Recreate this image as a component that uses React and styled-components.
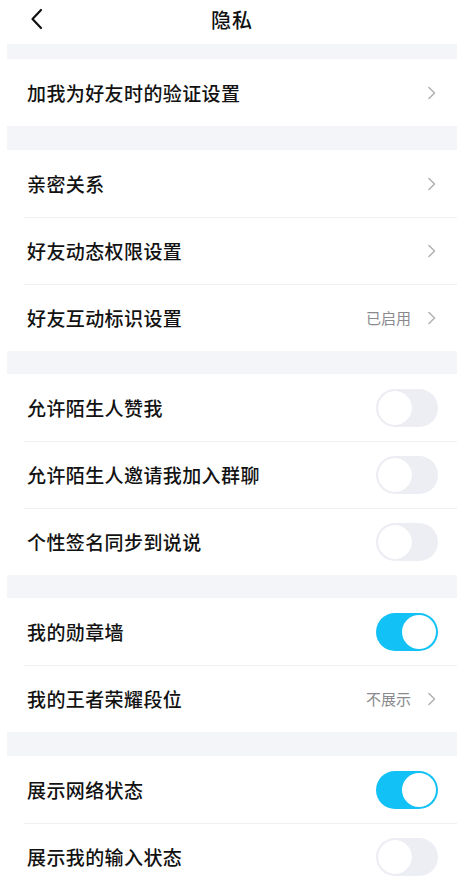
import React from 'react';
import styled, { createGlobalStyle } from 'styled-components';

const GlobalStyle = createGlobalStyle`
  html, body {
    margin: 0;
    padding: 0;
    background: #ffffff;
    font-family: "Noto Sans CJK SC", "Noto Sans", sans-serif;
  }
`;

const Page = styled.div`
  width: 450px;
  margin-left: 7px;
  background: #ffffff;
  height: 883px;
  overflow: hidden;
`;

const Header = styled.div`
  height: 44px;
  display: flex;
  align-items: center;
  justify-content: center;
  position: relative;
`;

const BackButton = styled.div`
  position: absolute;
  left: 18px;
  top: 7px;
  width: 24px;
  height: 24px;
  display: flex;
  align-items: center;
  justify-content: center;
`;

const Title = styled.h1`
  margin: 0;
  margin-top: -6px;
  font-size: 20px;
  font-weight: 500;
  color: #111111;
  letter-spacing: 1px;
`;

const Band = styled.div`
  height: ${(p) => p.h}px;
  background: #f4f5f8;
`;

const Row = styled.div`
  height: 67px;
  display: flex;
  align-items: center;
  padding: 0 19px 0 20px;
  position: relative;
  &:not(:first-child)::before {
    content: '';
    position: absolute;
    top: 0;
    left: 17px;
    right: 0;
    height: 1px;
    background: #f0f0f2;
  }
`;

const Label = styled.span`
  flex: 1;
  font-size: 19px;
  font-weight: 500;
  color: #121212;
  letter-spacing: 0.4px;
  margin-top: -1px;
`;

const Value = styled.span`
  font-size: 15px;
  color: #8a8a8e;
  margin-right: 16px;
`;

const Track = styled.div`
  width: 62px;
  height: 38px;
  border-radius: 19px;
  background: ${(p) => (p.on ? '#12c1f5' : '#eceef4')};
  position: relative;
`;

const Knob = styled.div`
  position: absolute;
  top: 2px;
  left: ${(p) => (p.on ? '26px' : '2px')};
  width: 34px;
  height: 34px;
  border-radius: 50%;
  background: #ffffff;
  box-shadow: ${(p) => (p.on ? 'none' : '0 0 1px rgba(0,0,0,0.06)')};
`;

const Chevron = () => (
  <svg width="10" height="14" viewBox="0 0 10 14" style={{ marginRight: 1 }}>
    <path d="M2 1.5 L7.5 7 L2 12.5" fill="none" stroke="#b3b3b6" strokeWidth="1.6" strokeLinecap="round" strokeLinejoin="round" />
  </svg>
);

const Switch = ({ on }) => (
  <Track on={on ? 1 : 0}>
    <Knob on={on ? 1 : 0} />
  </Track>
);

const groups = [
  { gap: 15, rows: [{ label: '加我为好友时的验证设置', arrow: true }] },
  {
    gap: 24,
    rows: [
      { label: '亲密关系', arrow: true },
      { label: '好友动态权限设置', arrow: true },
      { label: '好友互动标识设置', value: '已启用', arrow: true },
    ],
  },
  {
    gap: 23,
    rows: [
      { label: '允许陌生人赞我', toggle: false },
      { label: '允许陌生人邀请我加入群聊', toggle: false },
      { label: '个性签名同步到说说', toggle: false },
    ],
  },
  {
    gap: 23,
    rows: [
      { label: '我的勋章墙', toggle: true },
      { label: '我的王者荣耀段位', value: '不展示', arrow: true },
    ],
  },
  {
    gap: 24,
    rows: [
      { label: '展示网络状态', toggle: true },
      { label: '展示我的输入状态', toggle: false },
    ],
  },
];

export default function App() {
  return (
    <Page>
      <GlobalStyle />
      <Header>
        <BackButton>
          <svg width="16" height="22" viewBox="0 0 16 22">
            <path d="M12 2 L3.5 11 L12 20" fill="none" stroke="#111" strokeWidth="2.2" strokeLinecap="round" strokeLinejoin="round" />
          </svg>
        </BackButton>
        <Title>隐私</Title>
      </Header>
      {groups.map((g, gi) => (
        <React.Fragment key={gi}>
          <Band h={g.gap} />
          <div>
            {g.rows.map((r) => (
              <Row key={r.label}>
                <Label>{r.label}</Label>
                {r.value && <Value>{r.value}</Value>}
                {r.arrow && <Chevron />}
                {r.toggle !== undefined && <Switch on={r.toggle} />}
              </Row>
            ))}
          </div>
        </React.Fragment>
      ))}
    </Page>
  );
}
